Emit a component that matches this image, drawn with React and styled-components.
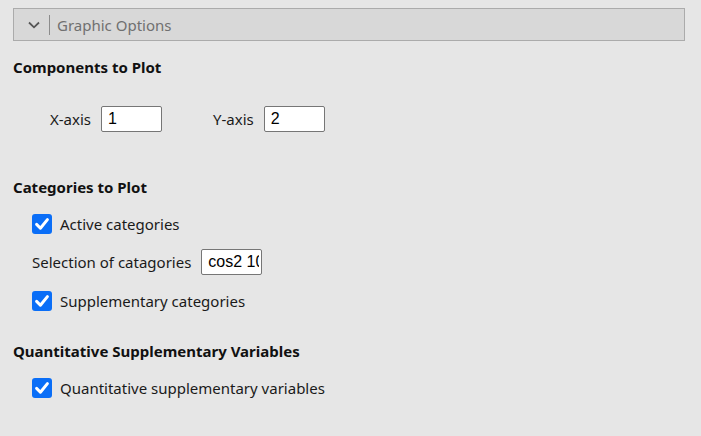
import styled, { createGlobalStyle } from 'styled-components';

const GlobalStyle = createGlobalStyle`
  html, body {
    margin: 0;
    padding: 0;
    background: #e6e6e6;
  }
  body {
    font-family: 'Segoe UI', 'Noto Sans', 'Open Sans', sans-serif;
    color: #111;
  }
`;

export default function App() {
  return (
    <>
      <GlobalStyle />
      <Page>
        <Header>
          <Chevron viewBox='0 0 12 8'>
            <path d='M1 1.5 L6 6.3 L11 1.5' fill='none' stroke='#555' strokeWidth='1.8' />
          </Chevron>
          <Divider />
          <HeaderTitle>Graphic Options</HeaderTitle>
        </Header>

        <SectionTitle $top={16}>Components to Plot</SectionTitle>
        <AxisRow>
          <Field>
            <Label>X-axis</Label>
            <TextInput defaultValue='1' />
          </Field>
          <Field>
            <Label>Y-axis</Label>
            <TextInput defaultValue='2' />
          </Field>
        </AxisRow>

        <SectionTitle $top={45}>Categories to Plot</SectionTitle>
        <Options>
          <Check label='Active categories' />
          <Field>
            <Label>Selection of catagories</Label>
            <TextInput defaultValue='cos2 10' />
          </Field>
          <Check label='Supplementary categories' />
        </Options>

        <SectionTitle $top={30}>Quantitative Supplementary Variables</SectionTitle>
        <Options>
          <Check label='Quantitative supplementary variables' />
        </Options>
      </Page>
    </>
  );
}

function Check({ label }) {
  return (
    <CheckRow>
      <Box>
        <svg viewBox='0 0 20 20' width='20' height='20'>
          <path d='M4.6 10.4 L8.4 14.2 L15.4 5.6' fill='none' stroke='#fff' strokeWidth='3' strokeLinecap='round' strokeLinejoin='round' />
        </svg>
      </Box>
      <Label>{label}</Label>
    </CheckRow>
  );
}

const Page = styled.div`
  padding: 8px 16px 0 13px;
`;

const Header = styled.div`
  display: flex;
  align-items: center;
  height: 31px;
  background: #d8d8d8;
  border: 1px solid #ababab;
`;

const Chevron = styled.svg`
  width: 12px;
  height: 8px;
  margin-left: 14px;
`;

const Divider = styled.div`
  width: 1px;
  height: 20px;
  background: #8c8c8c;
  margin-left: 9px;
`;

const HeaderTitle = styled.span`
  font-size: 15px;
  color: #707070;
  margin-left: 7px;
`;

const SectionTitle = styled.div`
  font-weight: 700;
  font-size: 15px;
  margin-top: ${(p) => p.$top}px;
  line-height: 20px;
`;

const AxisRow = styled.div`
  display: flex;
  gap: 51px;
  margin-top: 29px;
  padding-left: 37px;
`;

const Field = styled.div`
  display: flex;
  align-items: center;
  gap: 10px;
`;

const Label = styled.span`
  font-size: 15px;
  color: #1a1a1a;
`;

const TextInput = styled.input`
  box-sizing: border-box;
  width: 61px;
  height: 26px;
  margin: 0;
  padding: 0 2px 0 6px;
  border: 1px solid #767676;
  border-radius: 2px;
  background: #fff;
  font-family: 'Liberation Sans', Arial, sans-serif;
  font-size: 16px;
  color: #000;
  outline: none;
`;

const Options = styled.div`
  display: flex;
  flex-direction: column;
  gap: 15px;
  margin-top: 16px;
  padding-left: 19px;
`;

const CheckRow = styled.div`
  display: flex;
  align-items: center;
  gap: 8px;
  min-height: 21px;
`;

const Box = styled.span`
  display: flex;
  align-items: center;
  justify-content: center;
  width: 20px;
  height: 20px;
  border-radius: 3px;
  background: #0a6ef7;
`;
